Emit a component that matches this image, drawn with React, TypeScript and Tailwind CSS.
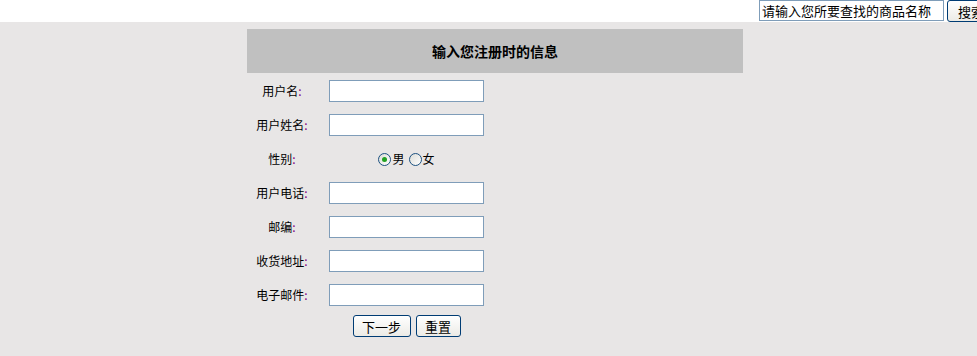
import React from "react";

const fields = ["用户名", "用户姓名", "性别", "用户电话", "邮编", "收货地址", "电子邮件"];

function Radio({ checked }: { checked?: boolean }) {
  return (
    <span className="inline-flex items-center justify-center w-[13px] h-[13px] rounded-full border border-[#1c5180] bg-gradient-to-br from-[#dcdcd7] to-white">
      {checked ? <span className="w-[5px] h-[5px] rounded-full bg-[#21a121]" /> : null}
    </span>
  );
}

export default function App() {
  const font = { fontFamily: '"Noto Sans CJK SC", "Noto Sans", sans-serif' };
  return (
    <div className="w-[977px] h-[356px] bg-[#e8e6e6] overflow-hidden text-black" style={font}>
      <div className="h-[22px] bg-white flex items-start pl-[759px] gap-[3px] overflow-hidden">
        <input
          readOnly
          value="请输入您所要查找的商品名称"
          className="w-[185px] h-[21px] shrink-0 border border-[#7f9db9] bg-white px-[2px] text-[13px] leading-[19px] text-black outline-none"
          style={font}
        />
        <button className="shrink-0 w-[50px] h-[22px] border border-[#003c74] rounded-[3px] bg-gradient-to-b from-white to-[#ecebe6] text-[13px] leading-none text-left pl-[10px]" style={font}>
          搜索
        </button>
      </div>
      <div className="pt-[7px] pl-[247px]">
        <div className="w-[496px]">
          <div className="h-[44px] bg-[#c0c0c0] flex items-center justify-center text-[14px] font-bold">
            输入您注册时的信息
          </div>
          <div className="mt-[1px]">
            {fields.map((f) => (
              <div key={f} className="h-[34px] flex items-center">
                <div className="w-[70px] text-center text-[12px] leading-none">
                  {f}
                  <span className="text-[#800080]">:</span>
                </div>
                <div className="w-[179px] flex justify-center items-center">
                  {f === "性别" ? (
                    <div className="flex items-center text-[12px] leading-none">
                      <Radio checked />
                      <span className="ml-[1px]">男</span>
                      <span className="ml-[4px]" />
                      <Radio />
                      <span className="ml-[1px]">女</span>
                    </div>
                  ) : (
                    <input readOnly className="w-[155px] h-[22px] border border-[#7f9db9] bg-white outline-none" />
                  )}
                </div>
              </div>
            ))}
            <div className="flex pt-[3px]">
              <div className="w-[70px]" />
              <div className="w-[179px] flex justify-center gap-[5px]">
                <button className="w-[58px] h-[22px] border border-[#003c74] rounded-[3px] bg-gradient-to-b from-white to-[#ecebe6] text-[13px] leading-none" style={font}>
                  下一步
                </button>
                <button className="w-[45px] h-[22px] border border-[#003c74] rounded-[3px] bg-gradient-to-b from-white to-[#ecebe6] text-[13px] leading-none" style={font}>
                  重置
                </button>
              </div>
            </div>
          </div>
        </div>
      </div>
    </div>
  );
}
